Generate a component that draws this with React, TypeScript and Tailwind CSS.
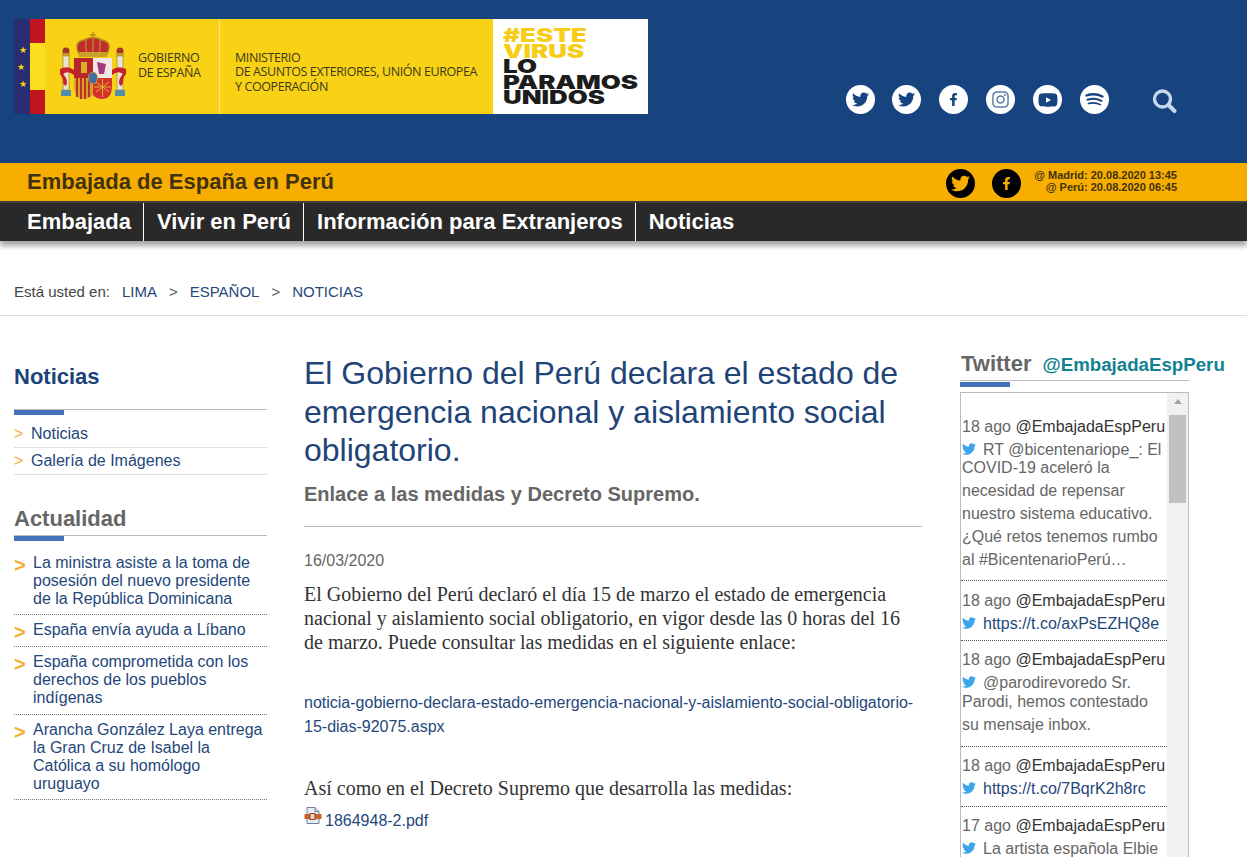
import { FaFacebookF, FaInstagram, FaTwitter, FaYoutube } from "react-icons/fa";
import type { ReactNode } from "react";

const NAV = ["Embajada", "Vivir en Perú", "Información para Extranjeros", "Noticias"];

const NEWS = [
  ["La ministra asiste a la toma de", "posesión del nuevo presidente", "de la República Dominicana"],
  ["España envía ayuda a Líbano"],
  ["España comprometida con los", "derechos de los pueblos", "indígenas"],
  ["Arancha González Laya entrega", "la Gran Cruz de Isabel la", "Católica a su homólogo", "uruguayo"],
];

interface Tweet {
  date: string;
  first: string;
  rest?: string[];
  link?: boolean;
  rule?: string;
  pull?: string;
}

const TWEETS: Tweet[] = [
  {
    date: "18 ago",
    first: "RT @bicentenariope_: El",
    rest: ["COVID-19 aceleró la", "necesidad de repensar", "nuestro sistema educativo.", "¿Qué retos tenemos rumbo", "al #BicentenarioPerú…"],
    rule: "pb-[9px] mb-[8px] border-b",
    pull: "-mt-[5px]",
  },
  { date: "18 ago", first: "https://t.co/axPsEZHQ8e", link: true, rule: "pb-[5px] mb-[7px] border-b" },
  {
    date: "18 ago",
    first: "@parodirevoredo Sr.",
    rest: ["Parodi, hemos contestado", "su mensaje inbox."],
    rule: "pb-[10px] mb-[7px] border-b",
    pull: "-mt-[4px]",
  },
  { date: "18 ago", first: "https://t.co/7BqrK2h8rc", link: true, rule: "pb-[6px] mb-[7px] border-b" },
  { date: "17 ago", first: "La artista española Elbie" },
];

function SocialCircle({ children }: { children: ReactNode }) {
  return (
    <span className="flex h-[29px] w-[29px] items-center justify-center rounded-full bg-white text-[#17437f]">
      {children}
    </span>
  );
}

function BlackCircle({ children }: { children: ReactNode }) {
  return (
    <span className="flex h-[29px] w-[29px] items-center justify-center rounded-full bg-black text-[#f7ae00]">
      {children}
    </span>
  );
}

function CoatOfArms() {
  return (
    <svg width="66" height="70" viewBox="0 0 66 70">
      {/* pillars */}
      <rect x="3" y="24" width="6" height="34" fill="#e8e4d0" stroke="#8a7a3a" strokeWidth="0.6" />
      <rect x="57" y="24" width="6" height="34" fill="#e8e4d0" stroke="#8a7a3a" strokeWidth="0.6" />
      <rect x="1" y="58" width="10" height="6" fill="#4f8fa8" />
      <rect x="55" y="58" width="10" height="6" fill="#4f8fa8" />
      <circle cx="6" cy="19" r="3.5" fill="#a6332a" />
      <circle cx="60" cy="19" r="3.5" fill="#a6332a" />
      <rect x="2" y="21" width="8" height="3" fill="#c49a2c" />
      <rect x="56" y="21" width="8" height="3" fill="#c49a2c" />
      {/* ribbons */}
      <path d="M0 37 Q8 33 14 38 L14 43 Q8 38 3 42 Q9 48 6 54 L3 52 Q4 47 0 42Z" fill="#c8202c" />
      <path d="M66 37 Q58 33 52 38 L52 43 Q58 38 63 42 Q57 48 60 54 L63 52 Q62 47 66 42Z" fill="#c8202c" />
      {/* crown */}
      <path d="M19 22 Q13 10 24 8 Q33 3 42 8 Q53 10 47 22Z" fill="#c22a30" stroke="#b58a1e" strokeWidth="1.5" />
      <path d="M33 0 L33 7 M30 3 L36 3 M26 8 Q25 15 27 21 M40 8 Q41 15 39 21 M33 7 V21" stroke="#b58a1e" strokeWidth="1.4" fill="none" />
      <rect x="19" y="20" width="28" height="5" fill="#c9a02c" />
      {/* shield */}
      <path d="M14 26 H52 V54 Q52 67 42 67 Q36 67 33 63 Q30 67 24 67 Q14 67 14 54Z" fill="#e9e4da" />
      <rect x="14" y="26" width="19" height="20" fill="#b8262d" />
      <rect x="21" y="30" width="6" height="11" fill="#dcae2a" />
      <rect x="33" y="26" width="19" height="20" fill="#f0e6e6" />
      <path d="M37 30 L46 32 L44 42 L39 42Z" fill="#a8387c" />
      <path d="M14 46 H33 V63 Q30 67 24 67 Q14 67 14 54Z" fill="#d8a024" />
      <path d="M17 46 V65 M21 46 V67 M25 46 V67 M29 46 V65" stroke="#b8262d" strokeWidth="1.8" />
      <path d="M33 46 H52 V54 Q52 67 42 67 Q36 67 33 63Z" fill="#d5312a" />
      <path d="M36 50 L49 60 M49 50 L36 60 M42.5 47 V65 M34 55 H51" stroke="#e0b030" strokeWidth="1" />
      <ellipse cx="33" cy="46" rx="4.5" ry="6" fill="#3f6ea8" stroke="#c49a2c" />
    </svg>
  );
}

function Logo() {
  return (
    <div className="flex h-[95px] w-[634px] font-['Open_Sans',sans-serif]">
      <div className="flex h-full w-[16px] flex-col items-center justify-center gap-[8px] bg-[#2a2d72] text-[9px] leading-[9px] text-[#f5d90f]">
        <span className="ml-[2px]">★</span>
        <span className="-ml-[3px]">★</span>
        <span className="ml-[2px]">★</span>
      </div>
      <div className="flex h-full w-[15px] flex-col">
        <div className="h-[24px] bg-[#c1161f]" />
        <div className="h-[47px] bg-[#fbdf1e]" />
        <div className="h-[24px] bg-[#c1161f]" />
      </div>
      <div className="flex h-full w-[175px] items-center border-r border-[#f3e58a] bg-[#f9d115] pl-[15px]">
        <CoatOfArms />
        <div className="mb-[2px] ml-[12px] whitespace-nowrap text-[12.5px] leading-[14.5px] tracking-[-0.35px] text-[#3a3a1c]">
          <div>GOBIERNO</div>
          <div>DE ESPAÑA</div>
        </div>
      </div>
      <div className="flex h-full w-[273px] flex-col justify-center whitespace-nowrap bg-[#f9d115] pl-[15px] pt-[12px] text-[12.5px] leading-[14.5px] tracking-[-0.4px] text-[#3a3a1c]">
        <div>MINISTERIO</div>
        <div>DE ASUNTOS EXTERIORES, UNIÓN EUROPEA</div>
        <div>Y COOPERACIÓN</div>
      </div>
      <div className="h-full w-[155px] bg-white pl-[10px] pt-[9px] font-['Inter',sans-serif] text-[19px] font-black leading-[15.5px]">
        <div className="origin-left scale-x-[1.36] text-[#f8cd17]">#ESTE</div>
        <div className="origin-left scale-x-[1.36] text-[#f8cd17]">VIRUS</div>
        <div className="origin-left scale-x-[1.36] text-[#1c1c1c]">LO</div>
        <div className="origin-left scale-x-[1.36] text-[#1c1c1c]">PARAMOS</div>
        <div className="origin-left scale-x-[1.36] text-[#1c1c1c]">UNIDOS</div>
      </div>
    </div>
  );
}

function SearchIcon() {
  return (
    <svg width="28" height="28" viewBox="0 0 28 28" fill="none" stroke="#c6daee">
      <circle cx="12.5" cy="12" r="8" strokeWidth="3.4" />
      <path d="M18.5 18 L24.5 24" strokeWidth="4" strokeLinecap="round" />
    </svg>
  );
}

function SpotifyIcon() {
  return (
    <svg width="29" height="29" viewBox="0 0 29 29" fill="none" stroke="#17437f" strokeLinecap="round">
      <circle cx="14.5" cy="14.5" r="14.5" fill="#fff" stroke="none" />
      <path d="M6.5 10.5 Q14.5 7.5 22.5 11.5" strokeWidth="2.4" />
      <path d="M7.5 14.8 Q14.5 12.5 21.5 15.8" strokeWidth="2" />
      <path d="M8.5 18.6 Q14.5 16.8 20.5 19.6" strokeWidth="1.6" />
    </svg>
  );
}

function Header() {
  return (
    <header className="flex h-[163px] bg-[#17437f] pl-[14px] pt-[19px]">
      <Logo />
      <div className="ml-[198px] mt-[66px] flex h-[29px]">
        <SocialCircle><FaTwitter size={17} /></SocialCircle>
        <span className="ml-[17px]"><SocialCircle><FaTwitter size={17} /></SocialCircle></span>
        <span className="ml-[18px]"><SocialCircle><FaFacebookF size={13} /></SocialCircle></span>
        <span className="ml-[18px]"><SocialCircle><FaInstagram size={19} className="text-[#5f7fa8]" /></SocialCircle></span>
        <span className="ml-[18px]"><SocialCircle><FaYoutube size={20} /></SocialCircle></span>
        <span className="ml-[18px]"><SpotifyIcon /></span>
        <span className="ml-[41px] mt-[2px]"><SearchIcon /></span>
      </div>
    </header>
  );
}

function Embassy() {
  return (
    <div className="flex h-[38px] items-center bg-[#f7ae00] pl-[27px] pr-[70px]">
      <span className="mb-[2px] text-[22px] font-bold text-[#40320e]">Embajada de España en Perú</span>
      <div className="ml-auto flex items-center">
        <div className="mt-[3px] flex gap-[17px]">
          <BlackCircle><FaTwitter size={19} /></BlackCircle>
          <BlackCircle><FaFacebookF size={13} /></BlackCircle>
        </div>
        <div className="mb-[2px] ml-[13px] whitespace-nowrap text-right text-[11px] font-bold leading-[12px] text-[#40320e]">
          <div>@ Madrid: 20.08.2020 13:45</div>
          <div>@ Perú: 20.08.2020 06:45</div>
        </div>
      </div>
    </div>
  );
}

function MainNav() {
  return (
    <nav className="flex h-[40px] border-t-2 border-[#3f3f3f] bg-[#292929] pl-[14px] shadow-[0_5px_5px_rgba(0,0,0,0.35)]">
      {NAV.map((item, i) => (
        <a
          key={item}
          className={`flex h-[38px] items-center pb-[1px] pl-[13px] pr-[12px] text-[22px] font-bold text-white ${
            i < NAV.length - 1 ? "border-r border-white" : ""
          }`}
        >
          {item}
        </a>
      ))}
    </nav>
  );
}

function Breadcrumb() {
  return (
    <div className="flex h-[75px] items-center border-b border-[#dcdcdc] pl-[14px] pt-[29px] text-[15px] text-[#24477a]">
      <span className="mr-[12px] text-[#444]">Está usted en:</span>
      <a>LIMA</a>
      <span className="mx-[12px] text-[#555]">&gt;</span>
      <a>ESPAÑOL</a>
      <span className="mx-[12px] text-[#555]">&gt;</span>
      <a>NOTICIAS</a>
    </div>
  );
}

function SideHeading({ title, blue }: { title: string; blue?: boolean }) {
  return (
    <div>
      <h2 className={`text-[22px] font-bold leading-[26px] ${blue ? "mb-[19px] text-[#1c4379]" : "mb-[3px] text-[#666]"}`}>
        {title}
      </h2>
      <div className="border-t border-[#bbb]">
        <div className="h-[5px] w-[50px] bg-[#4472b8]" />
      </div>
    </div>
  );
}

function Sidebar() {
  return (
    <aside className="ml-[14px] w-[253px] shrink-0 pt-[48px]">
      <SideHeading title="Noticias" blue />
      <ul className="mt-[6px] text-[16px] text-[#24477a]">
        {["Noticias", "Galería de Imágenes"].map((item) => (
          <li key={item} className="flex h-[27px] items-center border-b border-[#dcdfe6]">
            <span className="mr-[8px] w-[9px] text-[16px] text-[#f2ae30]">&gt;</span>
            {item}
          </li>
        ))}
      </ul>
      <div className="mt-[31px]">
        <SideHeading title="Actualidad" />
      </div>
      <ul className="mt-[6px] text-[16px] leading-[18px] text-[#24477a]">
        {NEWS.map((lines) => (
          <li
            key={lines[0]}
            className="flex border-b border-dotted border-[#777] pb-[7px] pt-[6px] first:pb-[6px] first:pt-[7px] last:pb-[6px]"
          >
            <span className="h-[18px] w-[19px] shrink-0 text-[20px] font-bold leading-[22px] text-[#f2ae30]">&gt;</span>
            <div>
              {lines.map((line) => (
                <div key={line}>{line}</div>
              ))}
            </div>
          </li>
        ))}
      </ul>
    </aside>
  );
}

function PdfIcon() {
  return (
    <svg width="18" height="18" viewBox="0 0 18 18">
      <path d="M3 0.5 H11 L15 4.5 V16.5 H3Z" fill="#e8ecf4" stroke="#6f7f9f" />
      <path d="M11 0.5 V4.5 H15" fill="#cfd6e6" stroke="#6f7f9f" />
      <rect x="0.5" y="7" width="17" height="5" fill="#c8622a" />
      <rect x="6" y="6.5" width="5" height="6" fill="#e8d8c0" stroke="#a03a20" />
    </svg>
  );
}

function Article() {
  return (
    <main className="ml-[37px] w-[618px] shrink-0 pt-[38px]">
      <h1 className="text-[32px] leading-[38.5px] text-[#1f4477]">
        El Gobierno del Perú declara el estado de emergencia nacional y aislamiento social obligatorio.
      </h1>
      <h2 className="mt-[13px] border-b border-[#bbb] pb-[21px] text-[20px] font-bold leading-[22px] text-[#666]">
        Enlace a las medidas y Decreto Supremo.
      </h2>
      <p className="mt-[24px] text-[16px] leading-[20px] text-[#666]">16/03/2020</p>
      <p className="mt-[11px] font-['Liberation_Serif',serif] text-[20px] leading-[24px] text-[#333]">
        El Gobierno del Perú declaró el día 15 de marzo el estado de emergencia nacional y aislamiento social obligatorio, en vigor desde las 0 horas del 16 de marzo. Puede consultar las medidas en el siguiente enlace:
      </p>
      <a className="mt-[37px] block text-[16px] leading-[24px] text-[#24477a]">
        noticia-gobierno-declara-estado-emergencia-nacional-y-aislamiento-social-obligatorio-
        <br />
        15-dias-92075.aspx
      </a>
      <p className="mt-[37px] font-['Liberation_Serif',serif] text-[20px] leading-[24px] text-[#333]">
        Así como en el Decreto Supremo que desarrolla las medidas:
      </p>
      <a className="mt-[9px] flex items-start text-[16px] leading-[24px] text-[#24477a]">
        <span className="mt-[-2px]"><PdfIcon /></span>
        <span className="ml-[3px]">1864948-2.pdf</span>
      </a>
    </main>
  );
}

function TweetBird() {
  return <FaTwitter size={14} className="mr-[7px] inline-block align-[-1px] text-[#3aa5ea]" />;
}

function TwitterPanel() {
  return (
    <aside className="ml-[38px] w-[229px] shrink-0 pt-[37px]">
      <div className="flex h-[28px] items-start border-b border-[#bbb] pl-[1px]">
        <span className="text-[22px] font-bold leading-[22px] text-[#666]">Twitter</span>
        <span className="ml-[11px] whitespace-nowrap text-[18.7px] font-bold leading-[24px] text-[#128290]">@EmbajadaEspPeru</span>
      </div>
      <div className="mt-px h-[5px] w-[50px] bg-[#4472b8]" />
      <div className="mt-[5px] flex h-[480px] border border-[#bbb] text-[16px] text-[#666]">
        <div className="w-[206px] shrink-0 pt-[22px]">
          {TWEETS.map((tweet) => (
            <div
              key={tweet.first}
              className={`whitespace-nowrap border-dotted border-[#555] pl-[1px] leading-[23px] ${tweet.rule ?? ""}`}
            >
              <div>
                {tweet.date} <span className="text-[#333]">@EmbajadaEspPeru</span>
              </div>
              <div className={tweet.link ? "text-[#24477a]" : ""}>
                <TweetBird />
                {tweet.first}
              </div>
              {tweet.rest?.map((line, j) => (
                <div key={line} className={j === 0 ? tweet.pull : ""}>{line}</div>
              ))}
            </div>
          ))}
        </div>
        <div className="relative w-[21px] bg-[#f1f1f1]">
          <div className="mx-auto mt-[6px] h-0 w-0 border-x-[4px] border-b-[5px] border-x-transparent border-b-[#a3a3a3]" />
          <div className="mx-auto mt-[11px] h-[88px] w-[17px] bg-[#c1c1c1]" />
          <div className="absolute bottom-0 left-[6px] h-0 w-0 border-x-[4px] border-t-[5px] border-x-transparent border-t-[#505050]" />
        </div>
      </div>
    </aside>
  );
}

export default function App() {
  return (
    <div className="h-[857px] overflow-hidden bg-white font-['Liberation_Sans',Arial,sans-serif]">
      <Header />
      <Embassy />
      <MainNav />
      <Breadcrumb />
      <div className="flex">
        <Sidebar />
        <Article />
        <TwitterPanel />
      </div>
    </div>
  );
}
